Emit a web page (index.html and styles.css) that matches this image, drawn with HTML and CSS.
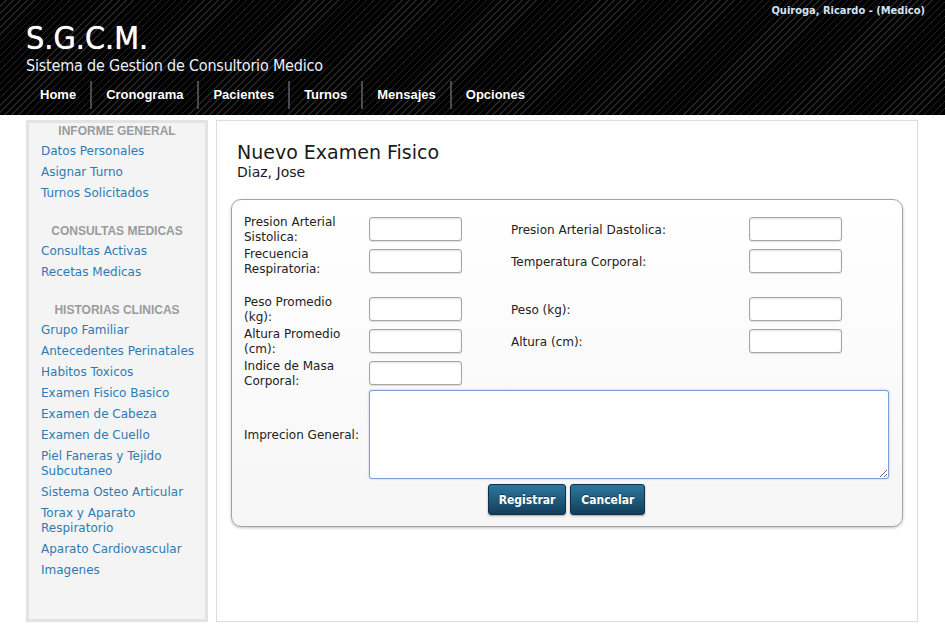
FILE: index.html
```html
<!DOCTYPE html>
<html lang="es">
<head>
<meta charset="utf-8">
<title>S.G.C.M.</title>
<link rel="stylesheet" href="styles.css">
</head>
<body>
<header class="top">
  <div class="user">Quiroga, Ricardo - (Medico)</div>
  <div class="logo">S.G.C.M.</div>
  <div class="tagline">Sistema de Gestion de Consultorio Medico</div>
  <nav class="menu">
    <a href="#">Home</a>
    <a href="#">Cronograma</a>
    <a href="#">Pacientes</a>
    <a href="#">Turnos</a>
    <a href="#">Mensajes</a>
    <a href="#">Opciones</a>
  </nav>
</header>
<div class="page">
  <aside class="side">
    <section class="side-sec">
      <h3 class="side-title">INFORME GENERAL</h3>
      <ul class="side-list">
        <li><a href="#">Datos Personales</a></li>
        <li><a href="#">Asignar Turno</a></li>
        <li><a href="#">Turnos Solicitados</a></li>
      </ul>
    </section>
    <section class="side-sec">
      <h3 class="side-title">CONSULTAS MEDICAS</h3>
      <ul class="side-list">
        <li><a href="#">Consultas Activas</a></li>
        <li><a href="#">Recetas Medicas</a></li>
      </ul>
    </section>
    <section class="side-sec">
      <h3 class="side-title">HISTORIAS CLINICAS</h3>
      <ul class="side-list">
        <li><a href="#">Grupo Familiar</a></li>
        <li><a href="#">Antecedentes Perinatales</a></li>
        <li><a href="#">Habitos Toxicos</a></li>
        <li><a href="#">Examen Fisico Basico</a></li>
        <li><a href="#">Examen de Cabeza</a></li>
        <li><a href="#">Examen de Cuello</a></li>
        <li><a href="#">Piel Faneras y Tejido Subcutaneo</a></li>
        <li><a href="#">Sistema Osteo Articular</a></li>
        <li><a href="#">Torax y Aparato Respiratorio</a></li>
        <li><a href="#">Aparato Cardiovascular</a></li>
        <li><a href="#">Imagenes</a></li>
      </ul>
    </section>
  </aside>
  <main class="content">
    <div class="head">
      <h1 class="title">Nuevo Examen Fisico</h1>
      <p class="patient">Diaz, Jose</p>
    </div>
    <form class="exam">
      <div class="grid">
        <label class="lbl">Presion Arterial Sistolica:</label>
        <input class="field" type="text">
        <label class="lbl wide">Presion Arterial Dastolica:</label>
        <input class="field" type="text">

        <label class="lbl">Frecuencia Respiratoria:</label>
        <input class="field" type="text">
        <label class="lbl wide">Temperatura Corporal:</label>
        <input class="field" type="text">

        <div class="spacer"></div>

        <label class="lbl">Peso Promedio (kg):</label>
        <input class="field" type="text">
        <label class="lbl wide">Peso (kg):</label>
        <input class="field" type="text">

        <label class="lbl">Altura Promedio (cm):</label>
        <input class="field" type="text">
        <label class="lbl wide">Altura (cm):</label>
        <input class="field" type="text">

        <label class="lbl">Indice de Masa Corporal:</label>
        <input class="field" type="text">
        <div class="empty"></div>
        <div class="empty"></div>

        <label class="lbl">Imprecion General:</label>
        <textarea class="notes"></textarea>

        <div class="actions">
          <button type="button" class="btn">Registrar</button>
          <button type="button" class="btn">Cancelar</button>
        </div>
      </div>
    </form>
  </main>
</div>
</body>
</html>
```
FILE: styles.css
```css
body {
  margin: 0;
  background: #fff;
  color: #222;
  font-family: "DejaVu Sans", Verdana, sans-serif;
  font-size: 12px;
}

/* header */
.top {
  height: 115px;
  box-sizing: border-box;
  padding: 0 20px 6px 26px;
  background: repeating-linear-gradient(135deg, #000 0 4px, #262626 4px 5px);
  color: #fff;
}
.user {
  height: 22px;
  line-height: 22px;
  text-align: right;
  font-family: "DejaVu Sans Condensed", "DejaVu Sans", sans-serif;
  font-weight: bold;
  font-size: 11px;
  color: #d3e2f0;
}
.logo {
  height: 32px;
  font-family: "DejaVu Sans Condensed", "DejaVu Sans", sans-serif;
  font-size: 32px;
  line-height: 32px;
  color: #fff;
  text-shadow: 0 0 1px #fff;
}
.tagline {
  margin-top: 4px;
  font-family: "DejaVu Sans Condensed", "DejaVu Sans", sans-serif;
  font-size: 16px;
  line-height: 16px;
  letter-spacing: -0.2px;
  color: #eaf1f8;
}
.menu {
  display: flex;
  height: 28px;
  margin-top: 7px;
}
.menu a {
  padding: 0 14px;
  font-family: "Liberation Sans", Arial, sans-serif;
  font-weight: bold;
  font-size: 13px;
  line-height: 28px;
  color: #fff;
  text-decoration: none;
  text-shadow: 1px 1px 1px #000;
}
.menu a + a {
  border-left: 2px solid #4a4a52;
}

/* page */
.page {
  display: flex;
  gap: 8px;
  padding: 5px 27px 0 26px;
}
.side {
  width: 182px;
  height: 502px;
  box-sizing: border-box;
  border: 3px solid #e3e3e3;
  background: #f4f4f4;
  padding-top: 1px;
}
.side-sec + .side-sec {
  margin-top: 23px;
}
.side-title {
  margin: 0 0 5px;
  text-align: center;
  font-family: "Liberation Sans", Arial, sans-serif;
  font-weight: bold;
  font-size: 12px;
  line-height: 15px;
  color: #9b9b9b;
}
.side-list {
  list-style: none;
  margin: 0;
  padding: 0 6px 0 12px;
}
.side-list li {
  margin-bottom: 6px;
  line-height: 15px;
}
.side-list a {
  color: #2d7bb5;
  text-decoration: none;
}

.content {
  flex: 1;
  height: 502px;
  box-sizing: border-box;
  border: 1px solid #dcdcdc;
  padding: 20px 14px 0;
}
.head {
  padding-left: 6px;
}
.title {
  margin: 0;
  font-size: 19px;
  line-height: 22px;
  font-weight: normal;
  color: #1a1a1a;
}
.patient {
  margin: 0;
  padding-top: 1px;
  font-size: 14px;
  line-height: 17px;
  color: #1a1a1a;
}

.exam {
  margin: 18px 0 0;
  border: 1px solid #a3a3a3;
  border-radius: 10px;
  background: linear-gradient(#fff, #f6f6f6);
  box-shadow: 0 1px 3px rgba(0, 0, 0, 0.25);
  padding: 13px 13px 11px 12px;
}
.grid {
  display: grid;
  grid-template-columns: 125px 142px 238px 1fr;
  grid-template-rows: 32px 32px 16px 32px 32px 32px auto auto;
  align-items: center;
}
.lbl {
  max-width: 118px;
  padding-top: 2px;
  line-height: 15px;
  color: #222;
}
.lbl.wide {
  max-width: none;
}
.spacer {
  grid-column: 1 / -1;
}
.field {
  width: 93px;
  height: 24px;
  box-sizing: border-box;
  border: 1px solid #a6a6a6;
  border-radius: 3px;
  background: #fff;
  box-shadow: inset 0 1px 2px rgba(0, 0, 0, 0.12), 0 1px 1px rgba(0, 0, 0, 0.12);
  margin: 0;
}
.notes {
  grid-column: 2 / 5;
  display: block;
  width: 100%;
  height: 89px;
  box-sizing: border-box;
  margin: 1px 0 0;
  border: 1px solid #7b9fd6;
  border-radius: 3px;
  box-shadow: 0 0 2px rgba(90, 140, 220, 0.6);
  background: #fff;
}
.actions {
  grid-column: 1 / -1;
  display: flex;
  justify-content: center;
  gap: 4px;
  margin-top: 5px;
}
.btn {
  height: 31px;
  padding: 0 10px;
  font-family: "DejaVu Sans Condensed", "DejaVu Sans", sans-serif;
  font-weight: bold;
  font-size: 12px;
  color: #fff;
  background: linear-gradient(#2f779e, #123e59);
  border: 1px solid #0e324a;
  border-radius: 3px;
  box-shadow: 0 1px 2px rgba(0, 0, 0, 0.35);
  text-shadow: 0 -1px 0 rgba(0, 0, 0, 0.4);
}
```
